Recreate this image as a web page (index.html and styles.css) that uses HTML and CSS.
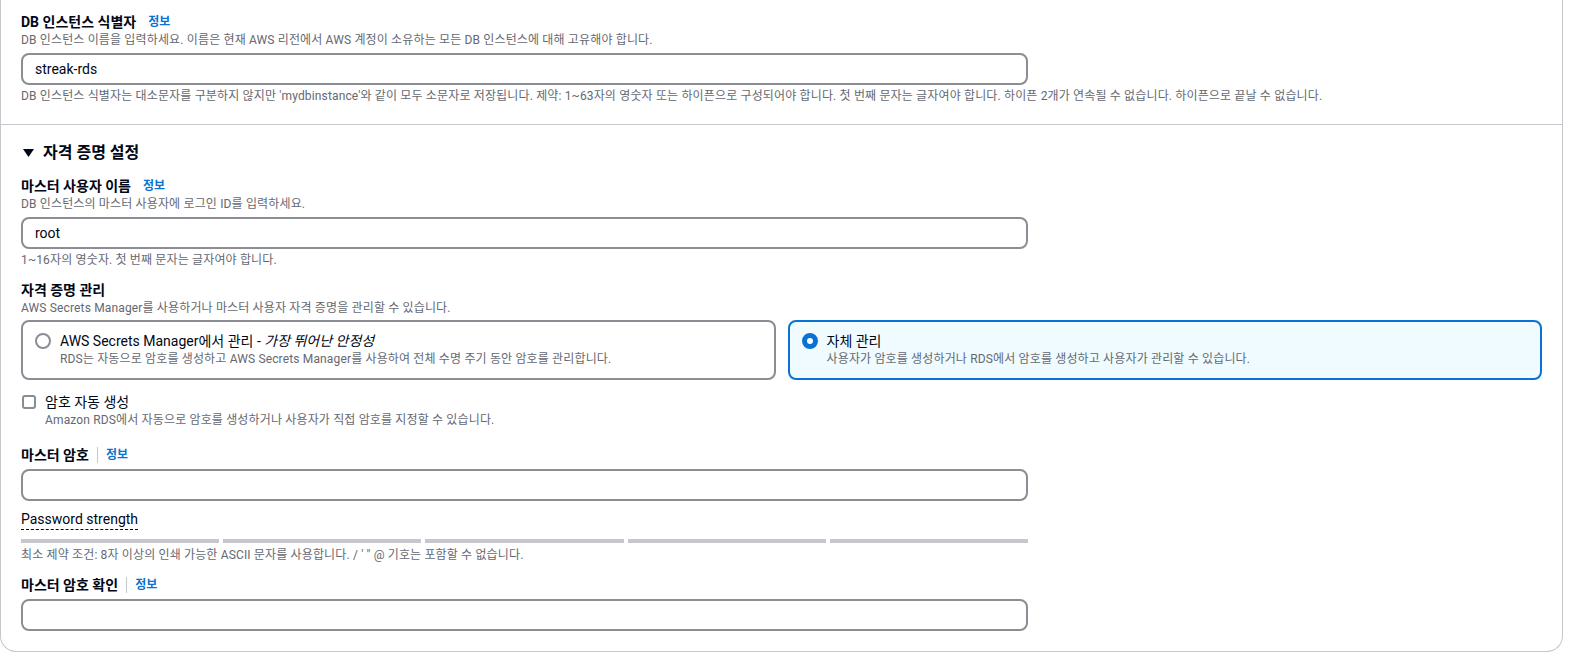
FILE: index.html
```html
<!DOCTYPE html>
<html lang="ko">
<head>
<meta charset="utf-8">
<link rel="stylesheet" href="styles.css">
</head>
<body>
<div class="container">
  <section class="sec sec-top">
    <div class="label-row"><span class="label">DB 인스턴스 식별자</span><a class="info info-plain">정보</a></div>
    <div class="desc">DB 인스턴스 이름을 입력하세요. 이름은 현재 AWS 리전에서 AWS 계정이 소유하는 모든 DB 인스턴스에 대해 고유해야 합니다.</div>
    <div class="input">streak-rds</div>
    <div class="hint">DB 인스턴스 식별자는 대소문자를 구분하지 않지만 'mydbinstance'와 같이 모두 소문자로 저장됩니다. 제약: 1~63자의 영숫자 또는 하이픈으로 구성되어야 합니다. 첫 번째 문자는 글자여야 합니다. 하이픈 2개가 연속될 수 없습니다. 하이픈으로 끝날 수 없습니다.</div>
  </section>
  <section class="sec sec-cred">
    <h2 class="sec-title"><svg class="caret" width="11" height="8" viewBox="0 0 11 8"><path d="M0 0 H11 L5.5 8 Z" fill="#000716"/></svg>자격 증명 설정</h2>

    <div class="label-row"><span class="label">마스터 사용자 이름</span><a class="info info-plain">정보</a></div>
    <div class="desc">DB 인스턴스의 마스터 사용자에 로그인 ID를 입력하세요.</div>
    <div class="input">root</div>
    <div class="hint">1~16자의 영숫자. 첫 번째 문자는 글자여야 합니다.</div>

    <div class="label-row gap12"><span class="label">자격 증명 관리</span></div>
    <div class="desc">AWS Secrets Manager를 사용하거나 마스터 사용자 자격 증명을 관리할 수 있습니다.</div>
    <div class="tiles">
      <div class="tile">
        <span class="radio"></span>
        <div class="tile-body">
          <div class="tile-title">AWS Secrets Manager에서 관리 - <em>가장 뛰어난 안정성</em></div>
          <div class="tile-desc">RDS는 자동으로 암호를 생성하고 AWS Secrets Manager를 사용하여 전체 수명 주기 동안 암호를 관리합니다.</div>
        </div>
      </div>
      <div class="tile tile-on">
        <span class="radio radio-on"></span>
        <div class="tile-body">
          <div class="tile-title">자체 관리</div>
          <div class="tile-desc">사용자가 암호를 생성하거나 RDS에서 암호를 생성하고 사용자가 관리할 수 있습니다.</div>
        </div>
      </div>
    </div>

    <div class="check">
      <span class="box"></span>
      <div>
        <div class="check-title">암호 자동 생성</div>
        <div class="check-desc">Amazon RDS에서 자동으로 암호를 생성하거나 사용자가 직접 암호를 지정할 수 있습니다.</div>
      </div>
    </div>

    <div class="label-row gap17"><span class="label">마스터 암호</span><span class="sep"></span><a class="info">정보</a></div>
    <div class="input"></div>
    <div class="strength">Password strength</div>
    <div class="bars"><span></span><span></span><span></span><span></span><span></span></div>
    <div class="hint hint-bars">최소 제약 조건: 8자 이상의 인쇄 가능한 ASCII 문자를 사용합니다. / ' " @ 기호는 포함할 수 없습니다.</div>

    <div class="label-row gap13"><span class="label">마스터 암호 확인</span><span class="sep"></span><a class="info">정보</a></div>
    <div class="input"></div>
  </section>
</div>
</body>
</html>
```
FILE: styles.css
```css
* { box-sizing: border-box; }
html, body { margin: 0; padding: 0; background: #ffffff; }
body {
  font-family: Roboto, "Noto Sans CJK KR", sans-serif;
  color: #000716;
  font-size: 14px;
}
.container {
  width: 1563px;
  height: 652px;
  border: 1px solid #c6c6cd;
  border-top: none;
  border-radius: 0 0 16px 16px;
  overflow: hidden;
}
.sec { padding: 0 20px; display: flex; flex-direction: column; }
.sec-top { padding-top: 12px; height: 124px; }
.sec-cred { border-top: 1px solid #c6c6cd; padding-top: 17px; }
.sec-title {
  margin: 0;
  font-size: 16px;
  font-weight: 700;
  line-height: 22px;
  display: flex;
  align-items: center;
  gap: 9px;
  padding-left: 2px;
}
.caret { display: block; }
.label-row { display: flex; align-items: center; height: 20px; }
.sec-title + .label-row { margin-top: 12px; }
.label { font-weight: 700; font-size: 14px; line-height: 20px; }
.info { color: #0972d3; font-weight: 700; font-size: 12px; line-height: 20px; text-decoration: none; }
.info-plain { margin-left: 12px; }
.sep { width: 1px; height: 16px; background: #c6c6cd; margin: 0 8px; }
.desc, .hint, .tile-desc, .check-desc { letter-spacing: 0.15px; }
.desc { font-size: 12px; line-height: 16px; color: #656871; }
.input {
  width: 1007px;
  height: 32px;
  margin-top: 5px;
  border: 2px solid #8c8c94;
  border-radius: 8px;
  padding: 0 12px;
  font-size: 14px;
  line-height: 28px;
  color: #000716;
}
.label-row + .input { margin-top: 4px; }
.hint { font-size: 12px; line-height: 16px; color: #656871; margin-top: 3px; }
.gap12 { margin-top: 12px; }
.gap17 { margin-top: 17px; }
.gap13 { margin-top: 12px; }
.tiles {
  margin-top: 4px;
  display: grid;
  grid-template-columns: 1fr 1fr;
  gap: 12px;
}
.tile {
  height: 60px;
  border: 2px solid #8c8c94;
  border-radius: 8px;
  display: flex;
  align-items: flex-start;
  padding: 9px 12px 0 12px;
  gap: 9px;
}
.tile-on { border-color: #0972d3; background: #f0fbff; }
.radio {
  flex: none;
  width: 16px;
  height: 16px;
  margin-top: 2px;
  border-radius: 50%;
  border: 2px solid #8c8c94;
  background: #fff;
}
.radio-on { border: 5px solid #0972d3; }
.tile-title { font-size: 14px; line-height: 20px; }
.tile-title em { font-style: italic; }
.tile-desc { font-size: 12px; line-height: 16px; color: #656871; }
.check { display: flex; margin-top: 12px; gap: 9px; padding-left: 1px; }
.box {
  flex: none;
  width: 14px;
  height: 14px;
  margin-top: 3px;
  border: 2px solid #8c8c94;
  border-radius: 3px;
}
.check-title { font-size: 14px; line-height: 20px; }
.check-desc { font-size: 12px; line-height: 16px; color: #656871; }
.strength {
  margin-top: 8px;
  align-self: flex-start;
  font-size: 14px;
  line-height: 20px;
  border-bottom: 1px dashed #000716;
}
.bars { margin-top: 9px; width: 1007px; display: flex; gap: 4px; }
.bars span { flex: 1; height: 4px; background: #c6c6cd; }
.hint-bars { margin-top: 4px; }
```
